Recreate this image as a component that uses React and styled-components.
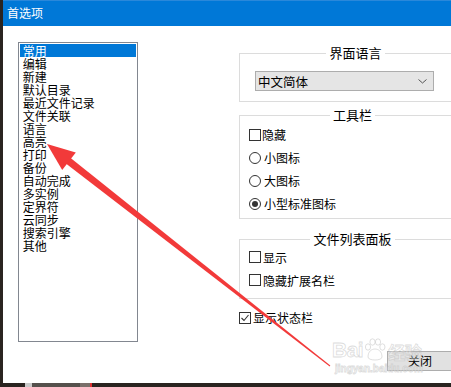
import React from "react";
import styled, { createGlobalStyle } from "styled-components";

const GlobalStyle = createGlobalStyle`
  html, body {
    margin: 0;
    padding: 0;
    overflow: hidden;
    background: #2a2420;
  }
  * { box-sizing: border-box; }
`;

const CJK = `"Noto Sans CJK SC", "Noto Sans", sans-serif`;

const Page = styled.div`
  position: relative;
  width: 451px;
  height: 387px;
  overflow: hidden;
  font-family: ${CJK};
`;

// the dialog window
const Window = styled.div`
  display: flex;
  flex-direction: column;
  width: 451px;
  height: 383px;
  border-left: 3px solid #2a2420;
  background: #fff;
`;

const TitleBar = styled.div`
  height: 26px;
  flex: none;
  background: #0078d7;
  border-top: 1px solid #2a88da;
  color: #fff;
  font-size: 12px;
  line-height: 24px;
  padding-left: 4px;
`;

const Content = styled.div`
  flex: 1;
  display: flex;
  padding: 16px 0 0 15px;
`;

const ListBox = styled.ul`
  list-style: none;
  margin: 0;
  padding: 1px;
  width: 120px;
  height: 300px;
  flex: none;
  border: 1px solid #828790;
`;

const ListItem = styled.li`
  font-size: 12px;
  line-height: 13px;
  height: 13px;
  padding-left: 2.7px;
  color: ${p => (p.$selected ? "#fff" : "#000")};
  background: ${p => (p.$selected ? "#0078d7" : "transparent")};
  white-space: nowrap;
`;

const RightColumn = styled.div`
  display: flex;
  flex-direction: column;
  width: 218px;
  flex: none;
  margin-left: 101px;
`;

const Group = styled.div`
  border: 1px solid #dcdcdc;
  margin-top: ${p => p.$top}px;
  padding: 0 0 ${p => p.$bottom}px ${p => p.$left}px;
`;

const Legend = styled.div`
  width: fit-content;
  margin: -9px auto 0;
  padding: 0 3px;
  background: #fff;
  font-size: 13px;
  line-height: 16px;
  color: #000;
`;

const Select = styled.div`
  display: flex;
  align-items: center;
  justify-content: space-between;
  margin-top: 10px;
  width: 179px;
  height: 20px;
  padding: 0 6px 0 2px;
  background: #e5e5e5;
  border: 1px solid #adadad;
  font-size: 12.5px;
`;

const Rows = styled.div`
  display: flex;
  flex-direction: column;
  margin-top: ${p => p.$shift}px;
`;

const Row = styled.label`
  display: flex;
  align-items: center;
  height: ${p => p.$h || 23}px;
  font-size: 12px;
  color: #000;
  gap: ${p => p.$gap || 1}px;
`;

const Box = styled.span`
  display: flex;
  align-items: center;
  justify-content: center;
  width: 12px;
  height: 12px;
  border: 1px solid #333;
  background: #fff;
`;

const Radio = styled.span`
  display: flex;
  align-items: center;
  justify-content: center;
  width: 12px;
  height: 12px;
  border: 1px solid #333;
  border-radius: 50%;
  background: #fff;
  margin-right: 2px;
  &::after {
    content: "";
    width: 6px;
    height: 6px;
    border-radius: 50%;
    background: ${p => (p.$on ? "#333" : "transparent")};
  }
`;

const CloseButton = styled.button`
  align-self: flex-end;
  margin: 27px 4px 0 0;
  width: 66px;
  height: 20px;
  padding: 0;
  background: #e1e1e1;
  border: 1px solid #adadad;
  font-family: ${CJK};
  font-size: 12px;
  color: #000;
`;

const Taskbar = styled.div`
  display: flex;
  height: 4px;
  background: #2a2420;
`;

const TaskSeg = styled.span`
  width: ${p => p.$w}px;
  margin-left: ${p => p.$ml || 0}px;
  background: ${p => p.$c};
`;

// faint baidu watermark sitting over the dialog
const Watermark = styled.div`
  position: absolute;
  left: 332px;
  top: 337px;
  pointer-events: none;
  color: rgba(255, 255, 255, 0.35);
  -webkit-text-stroke: 0.8px rgba(190, 190, 190, 0.55);
  font-family: "Liberation Sans", Arial, sans-serif;
`;

const MarkTop = styled.div`
  display: flex;
  align-items: flex-end;
  font-size: 21px;
  font-weight: bold;
  line-height: 26px;
  letter-spacing: -0.5px;
`;

const MarkCJK = styled.span`
  font-family: ${CJK};
  font-size: 17px;
  font-weight: bold;
  line-height: 22px;
  margin-left: 1px;
`;

const MarkUrl = styled.div`
  font-size: 10px;
  font-weight: bold;
  line-height: 12px;
  margin-left: 3px;
`;

const Arrow = styled.svg`
  position: absolute;
  left: 0;
  top: 0;
  pointer-events: none;
`;

const categories = [
  "常用", "编辑", "新建", "默认目录", "最近文件记录", "文件关联", "语言", "高亮",
  "打印", "备份", "自动完成", "多实例", "定界符", "云同步", "搜索引擎", "其他",
];

const CheckMark = () => (
  <svg width="10" height="10" viewBox="0 0 10 10">
    <polyline points="1.5,5 4,7.5 8.5,2" fill="none" stroke="#333" strokeWidth="1.1" />
  </svg>
);

// red annotation arrow pointing at 高亮
const arrowPoints = () => {
  const tip = [47, 144];
  const tail = [330, 366];
  const dx = tail[0] - tip[0];
  const dy = tail[1] - tip[1];
  const len = Math.hypot(dx, dy);
  const u = [dx / len, dy / len];
  const n = [-u[1], u[0]];
  const headLen = 28;
  const base = [tip[0] + u[0] * headLen, tip[1] + u[1] * headLen];
  const at = (p, k, w) => `${(p[0] + n[0] * w * k).toFixed(1)},${(p[1] + n[1] * w * k).toFixed(1)}`;
  const neck = [base[0] - u[0] * 2, base[1] - u[1] * 2];
  return {
    head: `${tip.join(",")} ${at(base, 1, 11)} ${at(base, -1, 11)}`,
    body: `${at(neck, 1, 3.6)} ${at(tail, 1, 0.5)} ${at(tail, -1, 0.5)} ${at(neck, -1, 3.6)}`,
  };
};

export default function App() {
  const arrow = arrowPoints();
  return (
    <Page>
      <GlobalStyle />
      <Window>
        <TitleBar>首选项</TitleBar>
        <Content>
          <ListBox>
            {categories.map((c, i) => (
              <ListItem key={c} $selected={i === 0}>{c}</ListItem>
            ))}
          </ListBox>
          <RightColumn>
            <Group $top={11} $bottom={10} $left={15}>
              <Legend>界面语言</Legend>
              <Select>
                <span>中文简体</span>
                <svg width="9" height="5" viewBox="0 0 9 5">
                  <polyline points="0.5,0.5 4.5,4 8.5,0.5" fill="none" stroke="#555" strokeWidth="1" />
                </svg>
              </Select>
            </Group>
            <Group $top={13} $bottom={3} $left={9}>
              <Legend>工具栏</Legend>
              <Rows $shift={0}>
                <Row><Box />隐藏</Row>
                <Row><Radio />小图标</Row>
                <Row><Radio />大图标</Row>
                <Row><Radio $on />小型标准图标</Row>
              </Rows>
            </Group>
            <Group $top={20} $bottom={6} $left={9}>
              <Legend>文件列表面板</Legend>
              <Rows $shift={-1.5}>
                <Row $gap={2}><Box />显示</Row>
                <Row $gap={2}><Box />隐藏扩展名栏</Row>
              </Rows>
            </Group>
            <Row $h={12} $gap={2} style={{ marginTop: 13 }}>
              <Box><CheckMark /></Box>显示状态栏
            </Row>
            <CloseButton>关闭</CloseButton>
          </RightColumn>
        </Content>
      </Window>
      <Taskbar>
        <TaskSeg $w={7} $ml={25} $c="#c9c9c9" />
        <TaskSeg $w={48} $c="#55504c" />
        <TaskSeg $w={10} $c="#7a6f6a" />
        <TaskSeg $w={2} $c="#d33" />
      </Taskbar>
      <Watermark>
        <MarkTop>
          Bai
          <svg width="22" height="24" viewBox="0 0 22 24" style={{ margin: "0 1px 1px" }}>
            <g fill="rgba(255,255,255,0.35)" stroke="rgba(190,190,190,0.55)" strokeWidth="0.9">
              <ellipse cx="4" cy="9" rx="2.6" ry="3.2" />
              <ellipse cx="8.5" cy="4" rx="2.6" ry="3.2" />
              <ellipse cx="14" cy="4" rx="2.6" ry="3.2" />
              <ellipse cx="18.4" cy="9" rx="2.6" ry="3.2" />
              <path d="M4 19 C4 13 8 11 11 11 C14 11 18 13 18 19 C18 23 4 23 4 19 Z" />
            </g>
          </svg>
          <MarkCJK>经验</MarkCJK>
        </MarkTop>
        <MarkUrl>jingyan.baidu.com</MarkUrl>
      </Watermark>
      <Arrow width="451" height="387" viewBox="0 0 451 387">
        <polygon points={arrow.body} fill="#f23a3a" />
        <polygon points={arrow.head} fill="#f23a3a" />
      </Arrow>
    </Page>
  );
}
